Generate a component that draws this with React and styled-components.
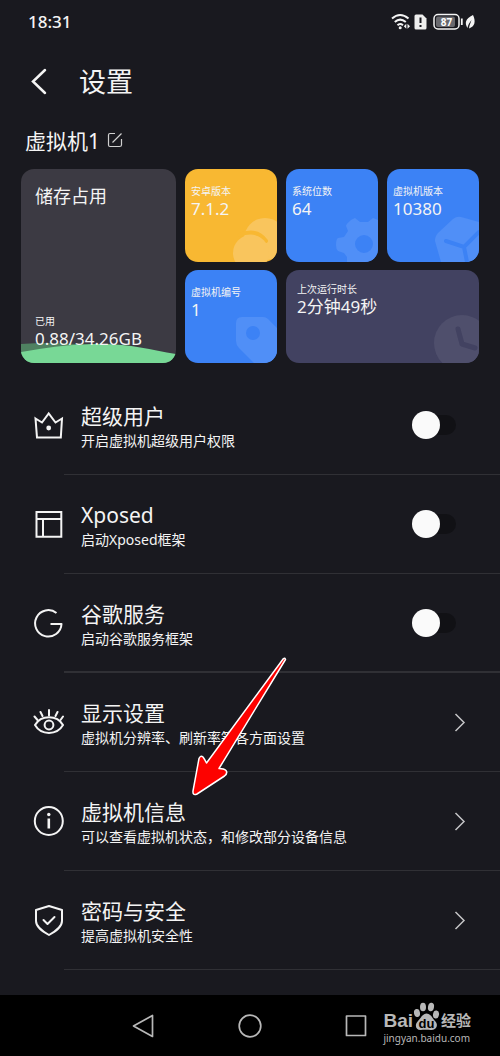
import React, { useState } from "react";
import styled, { createGlobalStyle } from "styled-components";

const GlobalStyle = createGlobalStyle`
  * {
    box-sizing: border-box;
  }

  body {
    margin: 0;
    background: #19191f;
    color: #f4f4f4;
    font-family: "Noto Sans", "Noto Sans CJK SC", sans-serif;
  }

  button {
    padding: 0;
    border: none;
    background: none;
    color: inherit;
    font: inherit;
    cursor: pointer;
  }

  svg {
    display: block;
  }
`;

const Page = styled.div`
  display: flex;
  flex-direction: column;
  min-height: 100vh;
  overflow: hidden;
`;

const StatusBar = styled.div`
  display: flex;
  justify-content: space-between;
  align-items: center;
  height: 44px;
  padding: 0 22px 0 28px;
`;

const Time = styled.time`
  font-size: 17px;
  font-weight: 500;
  line-height: 20px;
`;

const StatusIcons = styled.div`
  display: flex;
  align-items: center;
  gap: 3px;
`;

const Header = styled.header`
  display: flex;
  align-items: center;
  gap: 29px;
  height: 76px;
  padding: 0 28px;
`;

const Title = styled.h1`
  margin: 0;
  font-size: 27px;
  font-weight: 400;
  line-height: 36px;
`;

const MachineName = styled.div`
  display: flex;
  align-items: center;
  gap: 7px;
  height: 42px;
  padding: 0 25px;
  margin-bottom: 7px;
  font-size: 21px;
  line-height: 28px;
`;

const Cards = styled.section`
  display: grid;
  grid-template-columns: 155fr 92fr 92fr 92fr;
  grid-auto-rows: 93px;
  gap: 8px 9px;
  padding: 0 21px;
  margin-bottom: 13px;
`;

const Card = styled.div`
  position: relative;
  overflow: hidden;
  grid-column: span ${(props) => props.$cols || 1};
  border-radius: 13px;
  padding: ${(props) => props.$pad || "15px 6px"};
  background: ${(props) => props.$color};
`;

const StorageCard = styled(Card)`
  grid-row: span 2;
  display: flex;
  flex-direction: column;
  justify-content: space-between;
`;

const StorageTitle = styled.div`
  font-size: 18px;
  line-height: 26px;
`;

const StorageUsed = styled.div`
  position: relative;
  z-index: 1;
`;

const Label = styled.div`
  font-size: 10px;
  line-height: 14px;
`;

const Value = styled.div`
  font-size: 17px;
  line-height: 22px;
`;

const Wave = styled.svg`
  position: absolute;
  left: 0;
  bottom: 0;
  width: 100%;
  height: 20px;
`;

const CardArt = styled.svg`
  position: absolute;
  right: 0;
  bottom: 0;
`;

const List = styled.ul`
  list-style: none;
  margin: 0;
  padding: 0 0 25px;
`;

const Row = styled.li`
  display: flex;
  align-items: stretch;
  height: 99px;
`;

const RowIcon = styled.div`
  display: flex;
  align-items: center;
  justify-content: flex-end;
  width: 64px;
  padding-bottom: 2px;
`;

const RowBody = styled.div`
  flex: 1;
  display: flex;
  align-items: center;
  justify-content: space-between;
  padding: 0 ${(props) => props.$right}px 0 17px;
  border-bottom: ${(props) => (props.$thick ? 2 : 1)}px solid #303035;
`;

const RowText = styled.label`
  display: flex;
  flex-direction: column;
  padding-top: 4px;
`;

const RowTitle = styled.span`
  font-size: 21px;
  line-height: 28px;
`;

const RowNote = styled.span`
  font-size: 14px;
  line-height: 22px;
  white-space: nowrap;
`;

const Switch = styled.input`
  appearance: none;
  display: flex;
  align-items: center;
  width: 44px;
  height: 20px;
  margin: 0;
  border-radius: 10px;
  background: #111115;
  cursor: pointer;

  &::before {
    content: "";
    width: 28px;
    height: 28px;
    flex: none;
    border-radius: 50%;
    background: #fafafa;
  }

  &:checked {
    justify-content: flex-end;
    background: #3c82f6;
  }
`;

const NavBar = styled.nav`
  position: relative;
  flex: 1;
  display: flex;
  align-items: center;
  justify-content: center;
  gap: 82px;
  min-height: 61px;
  background: #000;
  color: #b8b8b8;
`;

const Watermark = styled.div`
  position: absolute;
  right: 29px;
  bottom: 11px;
  color: #b8b8b8;
`;

const Brand = styled.div`
  display: flex;
  align-items: flex-end;
  height: 29px;
  font-family: "Liberation Sans", "Noto Sans CJK SC", sans-serif;
  font-size: 19px;
  font-weight: 700;
  line-height: 20px;
`;

const BrandChinese = styled.span`
  margin-left: 1px;
  font-size: 15px;
`;

const Site = styled.div`
  font-size: 10px;
  line-height: 14px;
`;

const Arrow = styled.svg`
  position: absolute;
  left: 188px;
  top: 654px;
  pointer-events: none;
`;

const Line = ({ size = 32, children, ...rest }) => (
  <svg
    width={size}
    height={size}
    viewBox={`0 0 ${size} ${size}`}
    fill="none"
    stroke="currentColor"
    strokeWidth="2"
    strokeLinecap="round"
    strokeLinejoin="round"
    {...rest}
  >
    {children}
  </svg>
);

const CrownIcon = () => (
  <Line strokeLinejoin="miter">
    <path d="M3.5 9.5 L10 13.5 L16.7 4.5 L23.500 13.5 L30 9.5 L28.8 28.5 H5 Z" />
    <circle cx="16.7" cy="19" r="2.4" fill="currentColor" stroke="none" />
  </Line>
);

const LayoutIcon = () => (
  <Line strokeLinejoin="miter">
    <path d="M4.500 4 H29.3 V28.8 H4.500 Z M4.500 11 H29 M11 11 V28" />
  </Line>
);

const GoogleIcon = () => (
  <Line strokeLinecap="butt">
    <path d="M24.500 6 A13.2 13.2 0 1 0 29.500 17 H18.5" />
  </Line>
);

const EyeIcon = () => (
  <Line>
    <path d="M3 19 C9 8.5 25 8.5 31 19 C25 29.5 9 29.5 3 19 Z" />
    <circle cx="17" cy="19" r="4.4" />
    <path d="M17 9.5 V4 M10.5 10 L8.5 6 M23.5 10 L25.5 6 M5.5 14 L2.5 10.5 M28.5 14 L31 10.5" />
  </Line>
);

const InfoIcon = () => (
  <Line>
    <circle cx="16.8" cy="16" r="14" />
    <path d="M16.8 13.5 V23.5" strokeWidth="2.6" strokeLinecap="butt" />
    <circle cx="16.8" cy="9.5" r="1.7" fill="currentColor" stroke="none" />
  </Line>
);

const ShieldIcon = () => (
  <Line>
    <path d="M17 2 L30 6 V17 C30 23 24 27 17 31 C10 27 4 23 4 17 V6 Z" />
    <path d="M11.5 16 L15.5 20 L22.5 13" />
  </Line>
);

const rows = [
  { id: "root", icon: <CrownIcon />, title: "超级用户", note: "开启虚拟机超级用户权限", toggle: true },
  { id: "xposed", icon: <LayoutIcon />, title: "Xposed", note: "启动Xposed框架", toggle: true },
  { id: "google", icon: <GoogleIcon />, title: "谷歌服务", note: "启动谷歌服务框架", toggle: true, thick: true },
  { id: "display", icon: <EyeIcon />, title: "显示设置", note: "虚拟机分辨率、刷新率等各方面设置" },
  { id: "info", icon: <InfoIcon />, title: "虚拟机信息", note: "可以查看虚拟机状态，和修改部分设备信息" },
  { id: "security", icon: <ShieldIcon />, title: "密码与安全", note: "提高虚拟机安全性" },
];

const SettingRow = ({ row }) => {
  const [on, setOn] = useState(false);

  return (
    <Row>
      <RowIcon>{row.icon}</RowIcon>
      <RowBody $thick={row.thick} $right={row.toggle ? 44 : 33}>
        <RowText htmlFor={row.id}>
          <RowTitle>{row.title}</RowTitle>
          <RowNote>{row.note}</RowNote>
        </RowText>
        {row.toggle ? (
          <Switch type="checkbox" role="switch" id={row.id} checked={on} onChange={() => setOn(!on)} />
        ) : (
          <button type="button" id={row.id}>
            <svg width="14" height="20" viewBox="0 0 14 20" fill="none" stroke="#c4c4c6" strokeWidth="1.5">
              <path d="M2.5 2 L11 10.5 L2.5 19" />
            </svg>
          </button>
        )}
      </RowBody>
    </Row>
  );
};

const App = () => {
  return (
    <Page>
      <GlobalStyle />
      <StatusBar>
        <Time>18:31</Time>
        <StatusIcons>
          <svg width="20" height="18" viewBox="0 0 20 18" fill="none" stroke="currentColor" strokeWidth="2">
            <path d="M1 5.5 Q9 -1.5 17.5 5.5 M3.8 9 Q9 4.2 14.8 9 M6.5 12.2 Q9 9.8 12 12.2" />
            <circle cx="9.2" cy="14.8" r="1.5" fill="currentColor" stroke="none" />
            <path d="M15.3 10.7 L12.8 13.2 L15.3 15.7 Z M16.5 10.7 L19 13.2 L16.5 15.7 Z" fill="currentColor" stroke="none" />
          </svg>
          <svg width="13" height="16" viewBox="0 0 13 16">
            <path d="M2 0.5 H8.5 L12.5 4.5 V14 Q12.5 15.5 11 15.5 H2 Q0.5 15.5 0.5 14 V2 Q0.5 0.5 2 0.5 Z" fill="#eee" />
            <path d="M6.5 3.5 V9 M6.5 11 V13" stroke="#19191f" strokeWidth="2" />
          </svg>
          <svg width="48" height="18" viewBox="0 0 48 18">
            <rect x="4" y="1.5" width="25" height="14.5" rx="4" fill="none" stroke="#f4f4f4" strokeWidth="1.5" />
            <rect x="6" y="3.5" width="19" height="10.5" rx="2" fill="#69696e" />
            <text x="16.5" y="12.5" fill="#fff" fontSize="10" fontWeight="700" textAnchor="middle">87</text>
            <path d="M31.8 5.5 V12" stroke="#f4f4f4" strokeWidth="1.8" />
            <path d="M43 2 C35 6 34.5 10 37.5 15 C38 12 39.5 9.5 41.5 7 C40.5 10.5 39.3 12 39 15.5 C45 13.5 46 8.5 43 2 Z" fill="#f4f4f4" />
          </svg>
        </StatusIcons>
      </StatusBar>

      <Header>
        <button type="button" aria-label="返回">
          <svg width="22" height="28" viewBox="0 0 22 28" fill="none" stroke="currentColor" strokeWidth="2.5">
            <path d="M17 2 L5 13.5 L17 25" strokeLinecap="round" />
          </svg>
        </button>
        <Title>设置</Title>
      </Header>

      <MachineName>
        <span>虚拟机1</span>
        <button type="button" aria-label="编辑">
          <svg width="16" height="18" viewBox="0 0 16 18" fill="none" stroke="#d0d0d0" strokeWidth="1.2">
            <path d="M8 1.5 H3 Q1.5 1.5 1.5 3 V13 Q1.5 14.5 3 14.5 H12.5 Q14.5 14.5 14.5 13 V7 M5.5 10.5 L14.5 1.5" />
          </svg>
        </button>
      </MachineName>

      <Cards>
        <StorageCard $color="#3c3a43" $pad="14px 14px 13px">
          <StorageTitle>储存占用</StorageTitle>
          <StorageUsed>
            <Label>已用</Label>
            <Value>0.88/34.26GB</Value>
          </StorageUsed>
          <Wave viewBox="0 0 155 20" preserveAspectRatio="none">
            <path d="M0 1 Q45 -2 90 5 T155 14 V20 H0 Z" fill="#4f8161" />
            <path d="M0 9 C35 3 55 1 80 1 C110 1 130 7 155 11 V20 H0 Z" fill="#78d896" />
          </Wave>
        </StorageCard>

        <Card $color="#f8b832">
          <Label>安卓版本</Label>
          <Value>7.1.2</Value>
          <CardArt width="46" height="46" viewBox="0 0 46 46" fill="#f9c55d">
            <circle cx="34" cy="23" r="21" />
            <path d="M8 19 Q26 12 35 25" fill="none" stroke="#f8b832" strokeWidth="4" strokeLinecap="round" />
            <circle cx="20" cy="37" r="18" />
          </CardArt>
        </Card>

        <Card $color="#3c82f5">
          <Label>系统位数</Label>
          <Value>64</Value>
          <CardArt width="42" height="45" viewBox="0 0 42 45" fill="#508ff7">
            <path
              fillRule="evenodd"
              d="M15 3 L19 1 L24 5 H32 L37 1 L42 3 V45 H11 V40 L8 36 L2 34 Q0 32 0 28 Q0 22 2 21 L8 20 L12 14 L10 9 Q10 7 15 3 Z M28 18 A9 9 0 1 0 28 36 A9 9 0 1 0 28 18 Z"
            />
          </CardArt>
        </Card>

        <Card $color="#3c82f5">
          <Label>虚拟机版本</Label>
          <Value>10380</Value>
          <CardArt width="44" height="46" viewBox="0 0 44 46" fill="#508ff7">
            <path d="M3 17 L18 3 Q22 0 26 1 L44 6 V46 H6 L0 25 Q0 20 3 17 Z" />
            <path d="M11 25 L29 31 L44 16 M29 31 L32 46" fill="none" stroke="#3c82f5" strokeWidth="4" strokeLinecap="round" />
          </CardArt>
        </Card>

        <Card $color="#3c82f5">
          <Label>虚拟机编号</Label>
          <Value>1</Value>
          <CardArt width="41" height="47" viewBox="0 0 41 47" fill="#508ff7">
            <path
              fillRule="evenodd"
              d="M6 1 H27 Q30 1 32 3 L41 12 V44 L37 47 H18 L3 32 Q0 29 0 25 V7 Q0 1 6 1 Z M17 10 A7 7 0 1 0 17 24 A7 7 0 1 0 17 10 Z"
            />
          </CardArt>
        </Card>

        <Card $color="#424261" $cols={2} $pad="12px 11px">
          <Label>上次运行时长</Label>
          <Value>2分钟49秒</Value>
          <CardArt width="45" height="48" viewBox="0 0 45 48">
            <circle cx="28" cy="28" r="28" fill="#4f4f6c" />
            <path d="M24 14 L28 29 L41 33" fill="none" stroke="#424261" strokeWidth="5" strokeLinecap="round" strokeLinejoin="round" />
          </CardArt>
        </Card>
      </Cards>

      <List>
        {rows.map((row) => (
          <SettingRow key={row.id} row={row} />
        ))}
      </List>

      <NavBar>
        <button type="button" aria-label="后退">
          <Line size={24} strokeWidth="1.7">
            <path d="M20.5 1.5 V22.5 L1.5 12 Z" />
          </Line>
        </button>
        <button type="button" aria-label="主屏幕">
          <Line size={24} strokeWidth="1.7">
            <circle cx="12" cy="12" r="10.8" />
          </Line>
        </button>
        <button type="button" aria-label="最近任务">
          <Line size={24} strokeWidth="1.7">
            <rect x="2.5" y="2" width="19" height="19.5" />
          </Line>
        </button>
        <Watermark>
          <Brand>
            <span>Bai</span>
            <svg width="27" height="29" viewBox="0 0 27 29" fill="currentColor">
              <ellipse cx="4" cy="11" rx="3" ry="4" transform="rotate(-10 4 11)" />
              <ellipse cx="10" cy="5" rx="3" ry="4.3" />
              <ellipse cx="18" cy="5" rx="3" ry="4.3" transform="rotate(10 18 5)" />
              <ellipse cx="23" cy="12.5" rx="3" ry="4" transform="rotate(10 23 12.5)" />
              <path d="M13.5 11.5 C18 11.5 19 16 22 19 C26 23 23 28 19 28 C16 28 11 27.5 8 28 C3 28.5 1 23 5 19 C8 16 9.5 11.5 13.5 11.5 Z" />
              <text x="13.5" y="26" fill="#000" fontSize="13" fontWeight="700" textAnchor="middle">du</text>
            </svg>
            <BrandChinese>经验</BrandChinese>
          </Brand>
          <Site>jingyan.baidu.com</Site>
        </Watermark>
      </NavBar>

      <Arrow width="102" height="146" viewBox="0 0 102 146">
        <path
          d="M95.5 4.5 Q97 3.500 97.5 5.5 L31 114.5 Q36 114.5 38 116.5 Q40 119 36.5 122 L9 140 Q4.500 142 5 137 L11 104.5 Q12.500 101 15 103 Q16.500 105 18.5 109 Z"
          fill="#fd0200"
          stroke="#fff"
          strokeWidth="1.5"
          strokeLinejoin="round"
        />
      </Arrow>
    </Page>
  );
};

export default App;
